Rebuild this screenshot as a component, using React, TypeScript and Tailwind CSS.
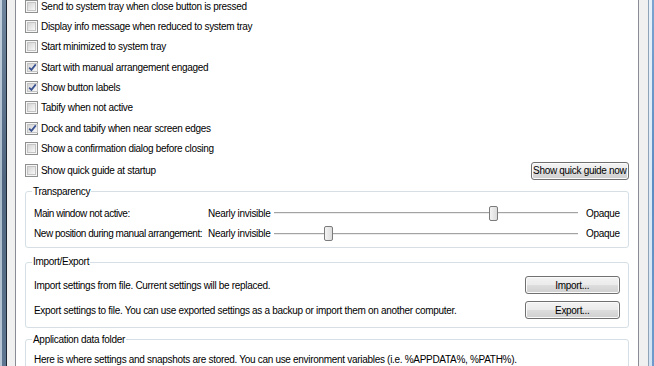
import type { ReactNode } from "react";

type Option = { label: string; checked?: boolean };

const options: Option[] = [
  { label: "Send to system tray when close button is pressed" },
  { label: "Display info message when reduced to system tray" },
  { label: "Start minimized to system tray" },
  { label: "Start with manual arrangement engaged", checked: true },
  { label: "Show button labels", checked: true },
  { label: "Tabify when not active" },
  { label: "Dock and tabify when near screen edges", checked: true },
  { label: "Show a confirmation dialog before closing" },
];

function CheckBox({ checked }: { checked?: boolean }) {
  return (
    <span className="flex size-[13px] shrink-0 border border-[#8e8f8f] bg-[#f6f6f6] p-[1px]">
      <span className="flex flex-1 items-center justify-center border border-[#c4c4c4] bg-[linear-gradient(135deg,#d4d4d4,#f8f8f8)]">
        {checked && (
          <svg width="9" height="9" viewBox="0 0 9 9">
            <path
              d="M1.2 4.6 L3.4 6.9 L7.8 1.4"
              fill="none"
              stroke="#3a5290"
              strokeWidth="1.7"
            />
          </svg>
        )}
      </span>
    </span>
  );
}

function WinButton({ children, className }: { children: ReactNode; className: string }) {
  return (
    <button
      className={`flex h-[18px] items-center justify-center rounded-[3px] border border-[#707070] bg-[linear-gradient(#f3f3f3_0%,#ebebeb_48%,#dddddd_52%,#cfcfcf_100%)] text-[10px] text-black shadow-[inset_0_0_0_1px_#fbfbfb] ${className}`}
    >
      {children}
    </button>
  );
}

function Group({ title, className, children }: { title: string; className: string; children: ReactNode }) {
  return (
    <fieldset className={`rounded-[3px] border border-[#d5dfe5] px-2 ${className}`}>
      <legend className="-ml-[2px] px-[1px] leading-[12px]">{title}</legend>
      {children}
    </fieldset>
  );
}

function Slider({ label, thumb }: { label: string; thumb: number }) {
  return (
    <div className="flex h-[20.5px] items-center whitespace-nowrap">
      <span className="w-[174px] shrink-0 tracking-[-0.45px]">{label}</span>
      <span className="w-[66px] shrink-0">Nearly invisible</span>
      <div className="relative flex h-full w-[304px] shrink-0 flex-col justify-center">
        <div className="h-px bg-[#a3a3a3]" />
        <div className="h-px bg-[#ececec]" />
        <div
          className="absolute top-[3px] h-[15px] w-[9px] rounded-[2px] border border-[#7b7b7b] bg-[linear-gradient(90deg,#f4f4f4,#dcdcdc)]"
          style={{ left: thumb }}
        />
      </div>
      <span className="ml-[8px]">Opaque</span>
    </div>
  );
}

export default function App() {
  return (
    <div className="flex h-[366px] w-[654px] overflow-hidden bg-white font-['Liberation_Sans',Arial,sans-serif] text-[10px] tracking-[-0.3px] text-black">
      {/* window frame left */}
      <div className="w-[2px] shrink-0 bg-[linear-gradient(#c3d0de,#a9bacb,#b8c6d6)]" />
      <div className="w-[4px] shrink-0 bg-[linear-gradient(#6f859d,#4f6580,#5e7691)]" />
      <div className="w-px shrink-0 bg-[#1c2733]" />
      <div className="w-[8px] shrink-0 bg-[#f0f0f0]" />
      <div className="w-px shrink-0 bg-[#898c95]" />

      <main className="flex flex-1 flex-col px-[9px]">
        <div className="-mt-[4.2px] flex flex-col">
          {options.map((o) => (
            <label key={o.label} className="flex h-[20.4px] items-center gap-[3px]">
              <CheckBox checked={o.checked} />
              <span>{o.label}</span>
            </label>
          ))}
          <div className="flex h-[24px] items-center justify-between">
            <label className="flex items-center gap-[3px]">
              <CheckBox />
              <span>Show quick guide at startup</span>
            </label>
            <WinButton className="w-[98px]">Show quick guide now</WinButton>
          </div>
        </div>

        <Group title="Transparency" className="mt-[3px] pt-[5px] pb-[3px]">
          <Slider label="Main window not active:" thumb={215} />
          <Slider label="New position during manual arrangement:" thumb={50} />
        </Group>

        <Group title="Import/Export" className="mt-[8.5px] pt-[4.5px] pb-[4.5px]">
          <div className="flex h-[25px] items-center justify-between">
            <span>Import settings from file. Current settings will be replaced.</span>
            <WinButton className="w-[95px]">Import...</WinButton>
          </div>
          <div className="flex h-[25px] items-center justify-between">
            <span>
              Export settings to file. You can use exported settings as a backup or import them on
              another computer.
            </span>
            <WinButton className="w-[95px]">Export...</WinButton>
          </div>
        </Group>

        <Group title="Application data folder" className="mt-[5.5px] pt-[7px] pb-2">
          <div className="flex h-[14px] items-center">
            Here is where settings and snapshots are stored. You can use environment variables (i.e.
            %APPDATA%, %PATH%).
          </div>
        </Group>
      </main>

      {/* window frame right */}
      <div className="w-px shrink-0 bg-[#898c95]" />
      <div className="w-[9px] shrink-0 bg-[#f0f0f0]" />
      <div className="w-px shrink-0 bg-[#8ea3b8]" />
      <div className="w-[3px] shrink-0 bg-[linear-gradient(#e6f0fa,#d3e3f3)]" />
      <div className="w-[4px] shrink-0 bg-[linear-gradient(#7aa3d0,#5b8cc2,#6f9bcc)]" />
    </div>
  );
}
